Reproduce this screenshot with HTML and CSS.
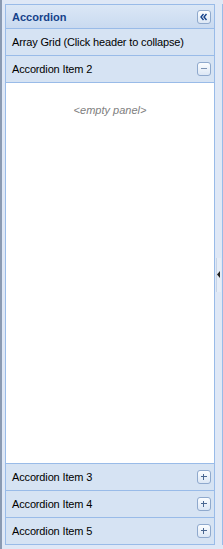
FILE: index.html
```html
<!DOCTYPE html>
<html>
<head>
<meta charset="utf-8">
<link rel="stylesheet" href="styles.css">
</head>
<body>
<div class="viewport">
  <div class="panel">
    <div class="title">
      <span class="title-text">Accordion</span>
      <span class="tool collapse">
        <svg width="12" height="12" viewBox="0 0 12 12"><path d="M5.5 3 L3 6 L5.5 9 M8.5 3 L6 6 L8.5 9" fill="none" stroke="#15428b" stroke-width="1.4"/></svg>
      </span>
    </div>
    <div class="item">
      <span>Array Grid (Click header to collapse)</span>
    </div>
    <div class="item">
      <span>Accordion Item 2</span>
      <span class="tool minus"></span>
    </div>
    <div class="body">
      <span class="empty">&lt;empty panel&gt;</span>
    </div>
    <div class="item">
      <span>Accordion Item 3</span>
      <span class="tool plus"></span>
    </div>
    <div class="item">
      <span>Accordion Item 4</span>
      <span class="tool plus"></span>
    </div>
    <div class="item last">
      <span>Accordion Item 5</span>
      <span class="tool plus"></span>
    </div>
  </div>
  <div class="split">
    <div class="mini">
      <svg width="4" height="7" viewBox="0 0 4 7"><path d="M3 0 L0 3.5 L3 7 Z" fill="#222"/></svg>
    </div>
  </div>
  <div class="east"></div>
</div>
</body>
</html>
```
FILE: styles.css
```css
html, body {
  margin: 0;
  padding: 0;
  height: 549px;
  overflow: hidden;
}
body {
  background: #dfe8f6;
  font-family: "Liberation Sans", Arial, sans-serif;
  font-size: 11px;
}
.viewport {
  height: 549px;
  box-sizing: border-box;
  border-left: 2px solid #8a9ab2;
  display: flex;
  padding: 4px 0 4px 3px;
}
.panel {
  width: 208px;
  border: 1px solid #99bbe8;
  display: flex;
  flex-direction: column;
  background: #fff;
  white-space: nowrap;
}
.title {
  height: 23px;
  display: flex;
  align-items: center;
  justify-content: space-between;
  padding: 1px 3px 0 6px;
  box-sizing: border-box;
  height: 24px;
  background: linear-gradient(#dbe7f6, #c9daf0);
  border-bottom: 1px solid #99bbe8;
}
.title-text {
  color: #15428b;
  font-weight: bold;
}
.item {
  height: 26px;
  display: flex;
  align-items: center;
  justify-content: space-between;
  padding: 0 3px 0 6px;
  background: #d6e3f3;
  border-bottom: 1px solid #99bbe8;
  color: #000;
  letter-spacing: -0.15px;
}
.item.last {
  border-bottom: none;
}
.tool {
  width: 14px;
  height: 14px;
  box-sizing: border-box;
  border: 1px solid #8fa9cd;
  border-radius: 3px;
  background: linear-gradient(#fbfdff, #dce7f5);
  position: relative;
  display: flex;
  align-items: center;
  justify-content: center;
}
.minus::after, .plus::after, .plus::before {
  content: "";
  position: absolute;
  background: #4a6791;
}
.minus::after, .plus::after {
  left: 3px;
  top: 5px;
  width: 6px;
  height: 1px;
}
.plus::before {
  left: 5px;
  top: 3px;
  width: 1px;
  height: 6px;
}
.minus::after {
  background: #7d93b4;
}
.body {
  flex: 1;
  background: #fff;
  border-bottom: 1px solid #99bbe8;
  display: flex;
  justify-content: center;
  padding-top: 21px;
}
.empty {
  color: #808080;
  font-style: italic;
}
.split {
  width: 7px;
  display: flex;
  align-items: center;
}
.mini {
  width: 5px;
  height: 34px;
  margin-left: 1px;
  box-sizing: border-box;
  border-left: 1px solid #c6d4e8;
  background: #e6edf7;
  display: flex;
  align-items: center;
  justify-content: center;
}
.east {
  flex: 1;
  border-left: 1px solid #99bbe8;
  border-top: 1px solid #99bbe8;
  border-bottom: 1px solid #99bbe8;
  background: #dfe8f6;
}
```
